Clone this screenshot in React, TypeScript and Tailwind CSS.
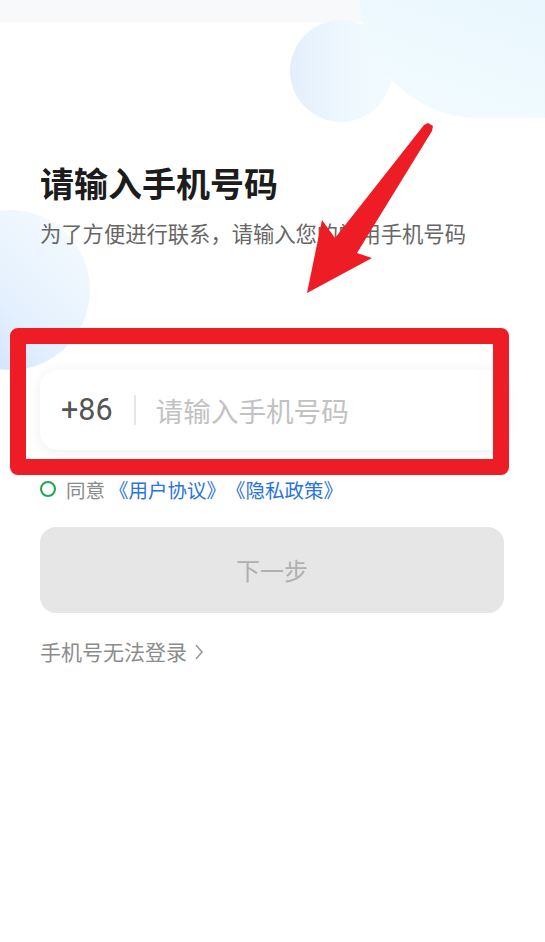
import React from 'react';

const cjk = "font-['Noto_Sans_CJK_SC',sans-serif]";

const Backdrop = () => (
  <div className="pointer-events-none absolute inset-0 overflow-hidden">
    {/* status bar tint */}
    <div className="absolute left-0 top-0 h-[22px] w-full bg-[#f7f9fb]" />
    {/* top-right clouds */}
    <div className="absolute left-[290px] top-[20px] h-[102px] w-[102px] rounded-full bg-[linear-gradient(90deg,#e5effc_0%,#eef8fe_60%,#f2fbff_100%)]" />
    <div className="absolute left-[360px] top-[-120px] h-[238px] w-[300px] rounded-full bg-[linear-gradient(200deg,#d7e9fc_0%,#e9f7fe_45%,#f3fcff_100%)]" />
    {/* left cloud */}
    <div className="absolute left-[-70px] top-[210px] h-[160px] w-[160px] rounded-full bg-[linear-gradient(45deg,#c6dbf8_0%,#e4f0fd_45%,#f7fcff_100%)]" />
  </div>
);

const Annotation = () => (
  <div className="pointer-events-none absolute inset-0">
    <div className="absolute left-[10px] top-[328px] h-[147px] w-[499px] rounded-[8px] border-[16px] border-[#ee1c25]" />
    <svg className="absolute left-0 top-0" width="545" height="942" viewBox="0 0 545 942">
      <polygon
        points="424,125 428,123 433,126 432,131 357,253 372,258 307,293 322,220 335,238"
        fill="#ee1c25"
      />
    </svg>
  </div>
);

export default function App() {
  return (
    <div className={`relative h-[942px] w-[545px] overflow-hidden bg-white [text-spacing-trim:space-all] ${cjk}`}>
      <Backdrop />

      <div className="relative px-[40px] pt-[166px]">
        <h1 className="m-0 text-[34px] font-bold leading-none text-[#1c1c1c]">请输入手机号码</h1>
        <p className="m-0 mt-[22px] whitespace-nowrap text-[21.3px] leading-none text-[#666666]">
          为了方便进行联系，请输入您的常用手机号码
        </p>

        {/* phone input */}
        <div className="mt-[127px] flex h-[80px] w-[465px] items-center rounded-[18px] bg-white pl-[21px] shadow-[0_2px_14px_rgba(0,0,0,0.07)]">
          <span className="font-['Roboto',sans-serif] text-[30.5px] leading-none text-[#555555]">+86</span>
          <span className="ml-[21px] h-[30px] w-[2px] bg-[#e6e6e6]" />
          <span className="ml-[20px] text-[27.6px] leading-none text-[#c2c2c2]">请输入手机号码</span>
        </div>

        {/* agreement */}
        <div className="mt-[29px] flex h-[20px] items-center text-[19.5px] leading-none">
          <span className="box-border h-[16px] w-[16px] rounded-full border-2 border-[#21a55a]" />
          <span className="ml-[10px] text-[#8a8a8a]">同意</span>
          <span className="ml-[4px] text-[#2a72e0]">《用户协议》《隐私政策》</span>
        </div>

        {/* next */}
        <div className="mt-[28px] flex h-[86px] w-[464px] items-center justify-center rounded-[16px] bg-[#e6e6e6]">
          <span className="text-[24px] leading-none text-[#b0b0b0]">下一步</span>
        </div>

        <div className="mt-[28px] flex items-center text-[21px] leading-none text-[#8c8c8c]">
          <span>手机号无法登录</span>
          <svg className="ml-[7px]" width="10" height="18" viewBox="0 0 10 18">
            <polyline points="2,2 8,9 2,16" fill="none" stroke="#9a9a9a" strokeWidth="1.6" />
          </svg>
        </div>
      </div>

      <Annotation />
    </div>
  );
}
